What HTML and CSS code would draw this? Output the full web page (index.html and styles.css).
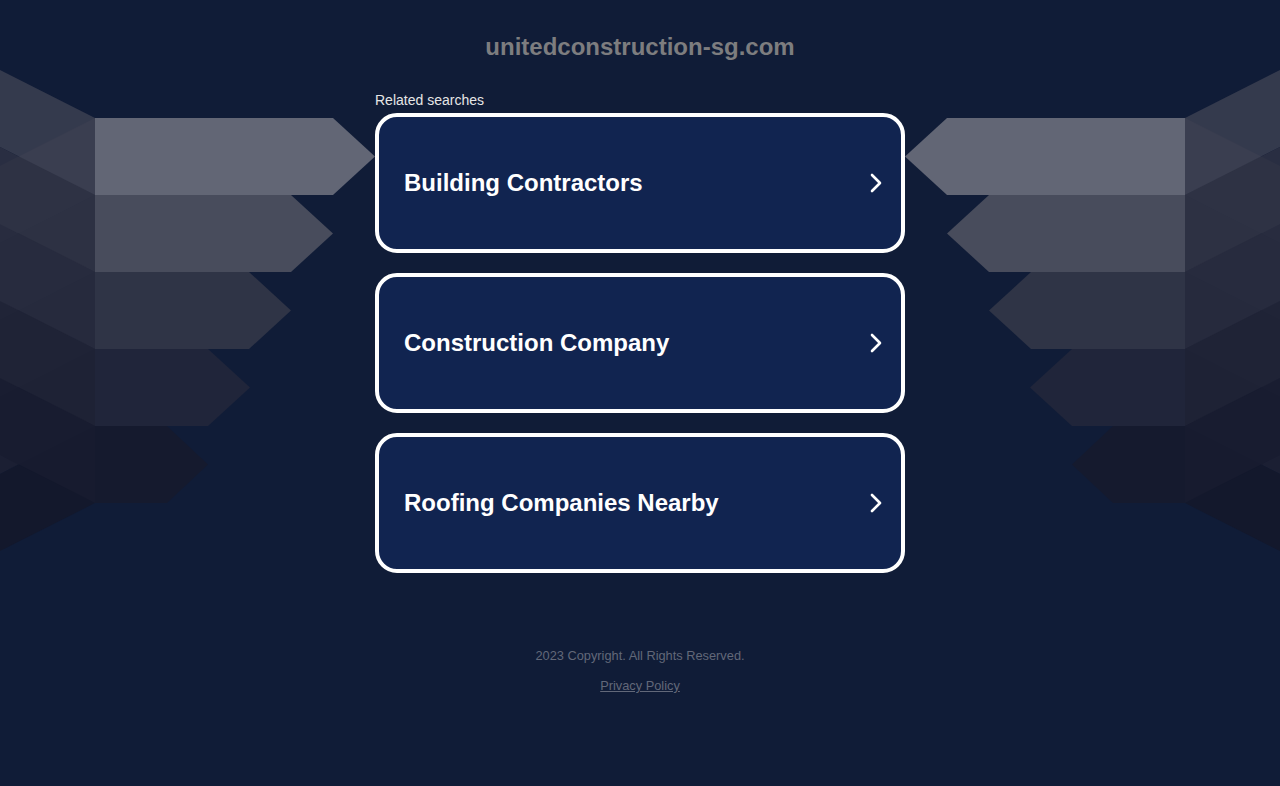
FILE: index.html
```html
<!DOCTYPE html>
<html lang="en">
<head>
<meta charset="utf-8">
<title>unitedconstruction-sg.com</title>
<link rel="stylesheet" href="styles.css">
</head>
<body>
<div class="wings" aria-hidden="true">
  <svg class="wing wing-left" width="380" height="560" viewBox="0 0 380 560">
    <polygon points="95,118 95,195 0,243 0,166" fill="#34384a"/>
    <polygon points="95,195 95,272 0,320 0,243" fill="#2a2e40"/>
    <polygon points="95,272 95,349 0,397 0,320" fill="#222639"/>
    <polygon points="95,349 95,426 0,474 0,397" fill="#1b1f33"/>
    <polygon points="95,426 95,503 0,551 0,474" fill="#13182c"/>
    <g opacity="0.86">
      <polygon points="95,118 95,195 0,147 0,70" fill="#3b3f51"/>
      <polygon points="95,195 95,272 0,224 0,147" fill="#2e3244"/>
      <polygon points="95,272 95,349 0,301 0,224" fill="#272b3e"/>
      <polygon points="95,349 95,426 0,378 0,301" fill="#1f2336"/>
      <polygon points="95,426 95,503 0,455 0,378" fill="#181c30"/>
    </g>
    <polygon points="95,426 167,426 208,464.5 167,503 95,503" fill="#151a2e"/>
    <polygon points="95,349 208,349 250,387.5 208,426 95,426" fill="#20253a"/>
    <polygon points="95,272 249,272 291,310.5 249,349 95,349" fill="#2f3446"/>
    <polygon points="95,195 291,195 333,233.5 291,272 95,272" fill="#484c5c"/>
    <polygon points="95,118 333,118 375,156.5 333,195 95,195" fill="#626675"/>
  </svg>
  <svg class="wing wing-right" width="380" height="560" viewBox="0 0 380 560">
    <polygon points="95,118 95,195 0,243 0,166" fill="#34384a"/>
    <polygon points="95,195 95,272 0,320 0,243" fill="#2a2e40"/>
    <polygon points="95,272 95,349 0,397 0,320" fill="#222639"/>
    <polygon points="95,349 95,426 0,474 0,397" fill="#1b1f33"/>
    <polygon points="95,426 95,503 0,551 0,474" fill="#13182c"/>
    <g opacity="0.86">
      <polygon points="95,118 95,195 0,147 0,70" fill="#3b3f51"/>
      <polygon points="95,195 95,272 0,224 0,147" fill="#2e3244"/>
      <polygon points="95,272 95,349 0,301 0,224" fill="#272b3e"/>
      <polygon points="95,349 95,426 0,378 0,301" fill="#1f2336"/>
      <polygon points="95,426 95,503 0,455 0,378" fill="#181c30"/>
    </g>
    <polygon points="95,426 167,426 208,464.5 167,503 95,503" fill="#151a2e"/>
    <polygon points="95,349 208,349 250,387.5 208,426 95,426" fill="#20253a"/>
    <polygon points="95,272 249,272 291,310.5 249,349 95,349" fill="#2f3446"/>
    <polygon points="95,195 291,195 333,233.5 291,272 95,272" fill="#484c5c"/>
    <polygon points="95,118 333,118 375,156.5 333,195 95,195" fill="#626675"/>
  </svg>
</div>

<main class="page">
  <h1 class="domain">unitedconstruction-sg.com</h1>
  <section class="searches">
    <p class="label">Related searches</p>
    <ul class="list">
      <li><a class="card" href="#"><span class="card-text">Building Contractors</span><svg class="chev" width="14" height="20" viewBox="0 0 14 20"><path d="M3 2 L11 10 L3 18" fill="none" stroke="#fff" stroke-width="2.6" stroke-linecap="round" stroke-linejoin="round"/></svg></a></li>
      <li><a class="card" href="#"><span class="card-text">Construction Company</span><svg class="chev" width="14" height="20" viewBox="0 0 14 20"><path d="M3 2 L11 10 L3 18" fill="none" stroke="#fff" stroke-width="2.6" stroke-linecap="round" stroke-linejoin="round"/></svg></a></li>
      <li><a class="card" href="#"><span class="card-text">Roofing Companies Nearby</span><svg class="chev" width="14" height="20" viewBox="0 0 14 20"><path d="M3 2 L11 10 L3 18" fill="none" stroke="#fff" stroke-width="2.6" stroke-linecap="round" stroke-linejoin="round"/></svg></a></li>
    </ul>
  </section>
  <footer class="footer">
    <p class="copy">2023 Copyright. All Rights Reserved.</p>
    <a class="privacy" href="#">Privacy Policy</a>
  </footer>
</main>
</body>
</html>
```

FILE: styles.css
```css
html, body {
  margin: 0;
  padding: 0;
}

body {
  background: #101c37;
  font-family: Arial, "Liberation Sans", sans-serif;
  min-height: 786px;
  position: relative;
  overflow: hidden;
}

.wings {
  position: absolute;
  inset: 0;
  z-index: 0;
  pointer-events: none;
}

.wing {
  position: absolute;
  top: 0;
  display: block;
}

.wing-left {
  left: 0;
}

.wing-right {
  right: 0;
  transform: scaleX(-1);
}

.page {
  position: relative;
  z-index: 1;
  width: 530px;
  margin: 0 auto;
  display: flex;
  flex-direction: column;
}

.domain {
  margin: 0;
  padding-top: 32px;
  font-size: 24px;
  line-height: 30px;
  font-weight: bold;
  text-align: center;
  color: #7d7d7f;
}

.searches {
  margin-top: 30px;
}

.label {
  margin: 0 0 5px;
  font-size: 14px;
  line-height: 16px;
  color: #e6e6e6;
}

.list {
  list-style: none;
  margin: 0;
  padding: 0;
  display: flex;
  flex-direction: column;
  gap: 20px;
}

.card {
  box-sizing: border-box;
  height: 140px;
  display: flex;
  align-items: center;
  justify-content: space-between;
  padding: 0 18px 0 25px;
  border: 4px solid #ffffff;
  border-radius: 22px;
  background: #112450;
  text-decoration: none;
  color: #ffffff;
}

.card-text {
  font-size: 24px;
  font-weight: bold;
  line-height: 28px;
}

.chev {
  display: block;
}

.footer {
  margin-top: 76px;
  display: flex;
  flex-direction: column;
  align-items: center;
  gap: 16px;
}

.copy {
  margin: 0;
  font-size: 12.8px;
  line-height: 14px;
  color: #626879;
}

.privacy {
  font-size: 12.8px;
  line-height: 14px;
  color: #626879;
  text-decoration: underline;
}
```
